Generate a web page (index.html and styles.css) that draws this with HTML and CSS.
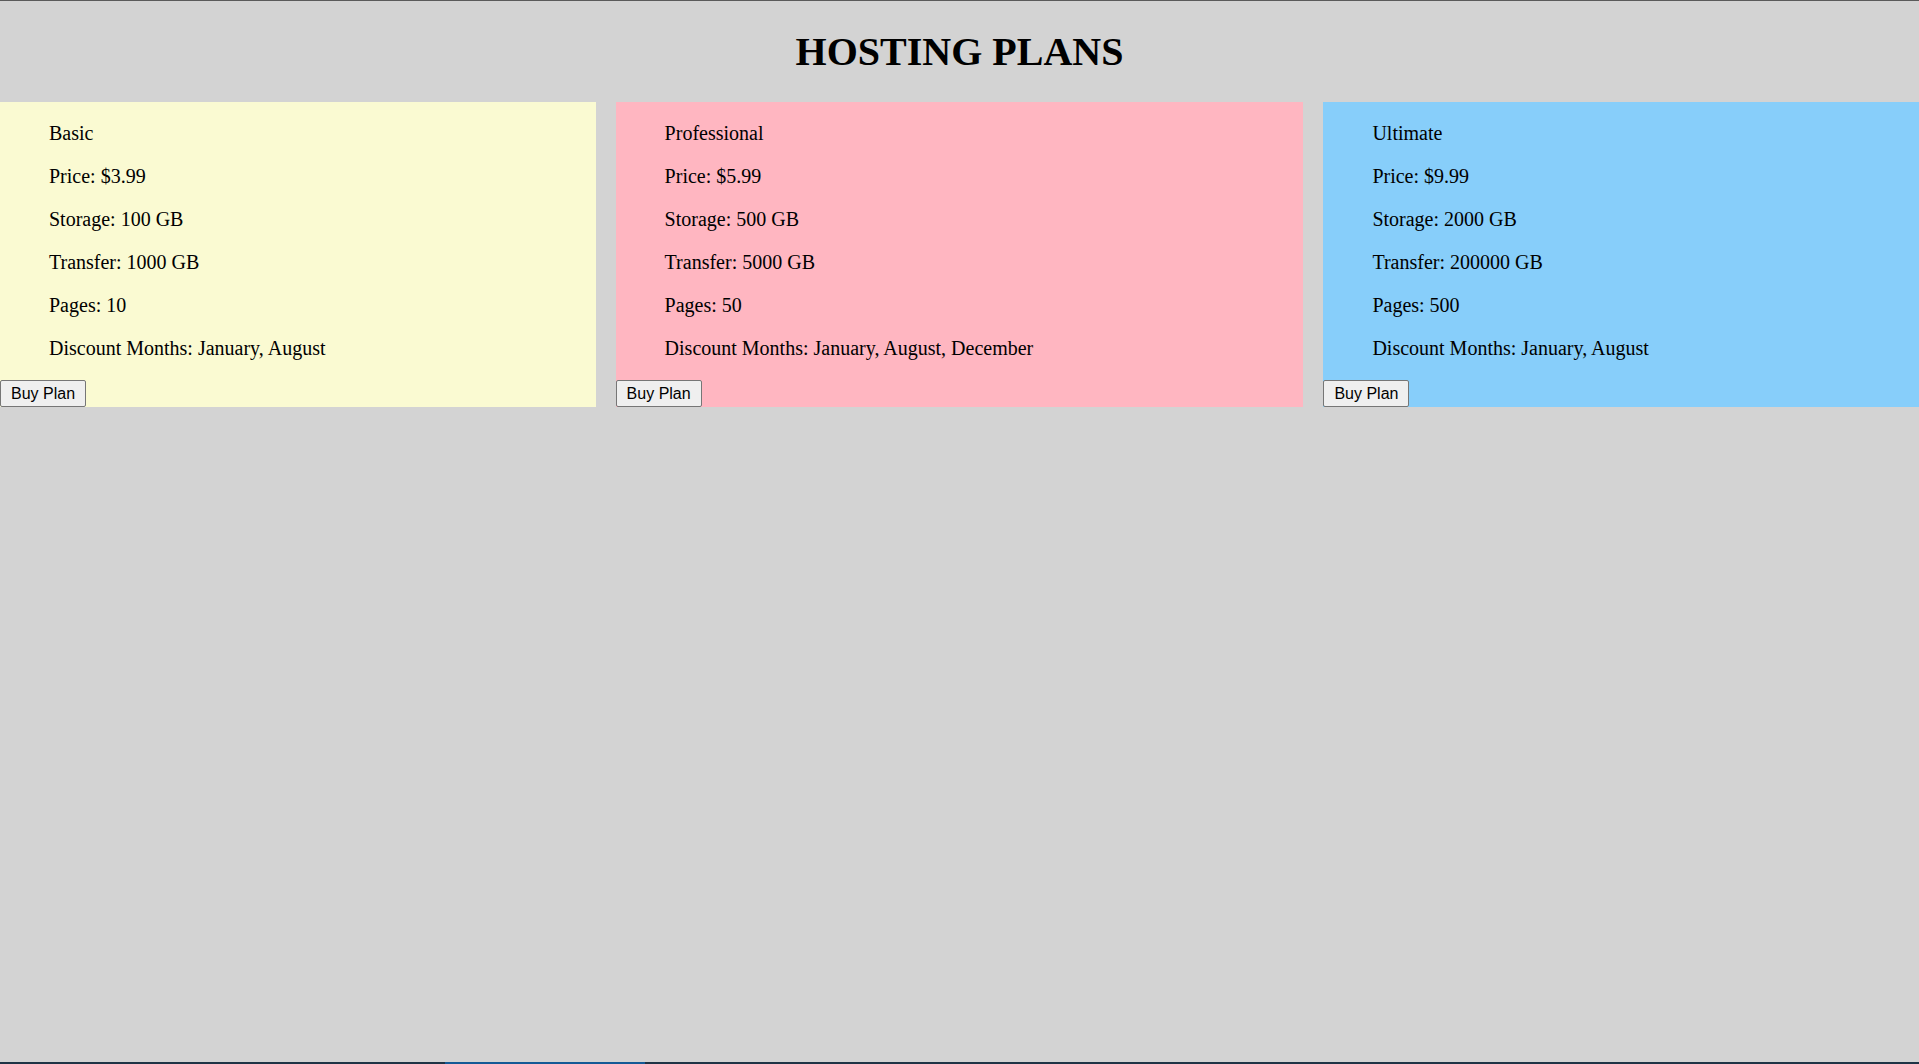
FILE: index.html
```html
<!DOCTYPE html>
<html lang="en">
<head>
<meta charset="utf-8">
<title>Hosting Plans</title>
<link rel="stylesheet" href="styles.css">
</head>
<body>
  <h1 class="title">HOSTING PLANS</h1>
  <div class="plans">
    <div class="plan plan-basic">
      <div class="plan-info">
        <p>Basic</p>
        <p>Price: $3.99</p>
        <p>Storage: 100 GB</p>
        <p>Transfer: 1000 GB</p>
        <p>Pages: 10</p>
        <p>Discount Months: January, August</p>
      </div>
      <button class="buy">Buy Plan</button>
    </div>
    <div class="plan plan-pro">
      <div class="plan-info">
        <p>Professional</p>
        <p>Price: $5.99</p>
        <p>Storage: 500 GB</p>
        <p>Transfer: 5000 GB</p>
        <p>Pages: 50</p>
        <p>Discount Months: January, August, December</p>
      </div>
      <button class="buy">Buy Plan</button>
    </div>
    <div class="plan plan-ultimate">
      <div class="plan-info">
        <p>Ultimate</p>
        <p>Price: $9.99</p>
        <p>Storage: 2000 GB</p>
        <p>Transfer: 200000 GB</p>
        <p>Pages: 500</p>
        <p>Discount Months: January, August</p>
      </div>
      <button class="buy">Buy Plan</button>
    </div>
  </div>
  <div class="taskbar"><span class="taskbar-active"></span></div>
</body>
</html>
```
FILE: styles.css
```css
html {
  height: 100%;
  box-sizing: border-box;
  border-top: 1px solid #5a5a5a;
  background: #d3d3d3;
}

body {
  margin: 0;
  min-height: 100%;
  display: flex;
  flex-direction: column;
  font-family: "Liberation Serif", "Times New Roman", serif;
  font-size: 20px;
  color: #000;
}

.title {
  margin: 28px 0 27px;
  font-size: 40px;
  line-height: 46px;
  font-weight: bold;
  text-align: center;
}

.plans {
  display: flex;
  gap: 20px;
}

.plan {
  flex: 1 1 auto;
  display: flex;
  flex-direction: column;
  align-items: flex-start;
}

.plan-basic { background: #fafad2; }
.plan-pro { background: #ffb6c1; }
.plan-ultimate { background: #87cefa; }

.plan-info {
  padding-left: 49px;
  padding-top: 20px;
  padding-bottom: 20px;
}

.plan-info p {
  margin: 0 0 20px;
  line-height: 23px;
}

.plan-info p:last-child {
  margin-bottom: 0;
}

.buy {
  font-family: "Liberation Sans", Arial, sans-serif;
  font-size: 16px;
  line-height: 18px;
  color: #000;
  background: #efefef;
  border: 1px solid #767676;
  border-radius: 2px;
  padding: 3px 10px;
  margin: 0;
  height: 27px;
}

.taskbar {
  margin-top: auto;
  height: 2px;
  background: #1f3446;
  display: flex;
}

.taskbar-active {
  margin-left: 445px;
  width: 200px;
  background: #155a96;
}
```
